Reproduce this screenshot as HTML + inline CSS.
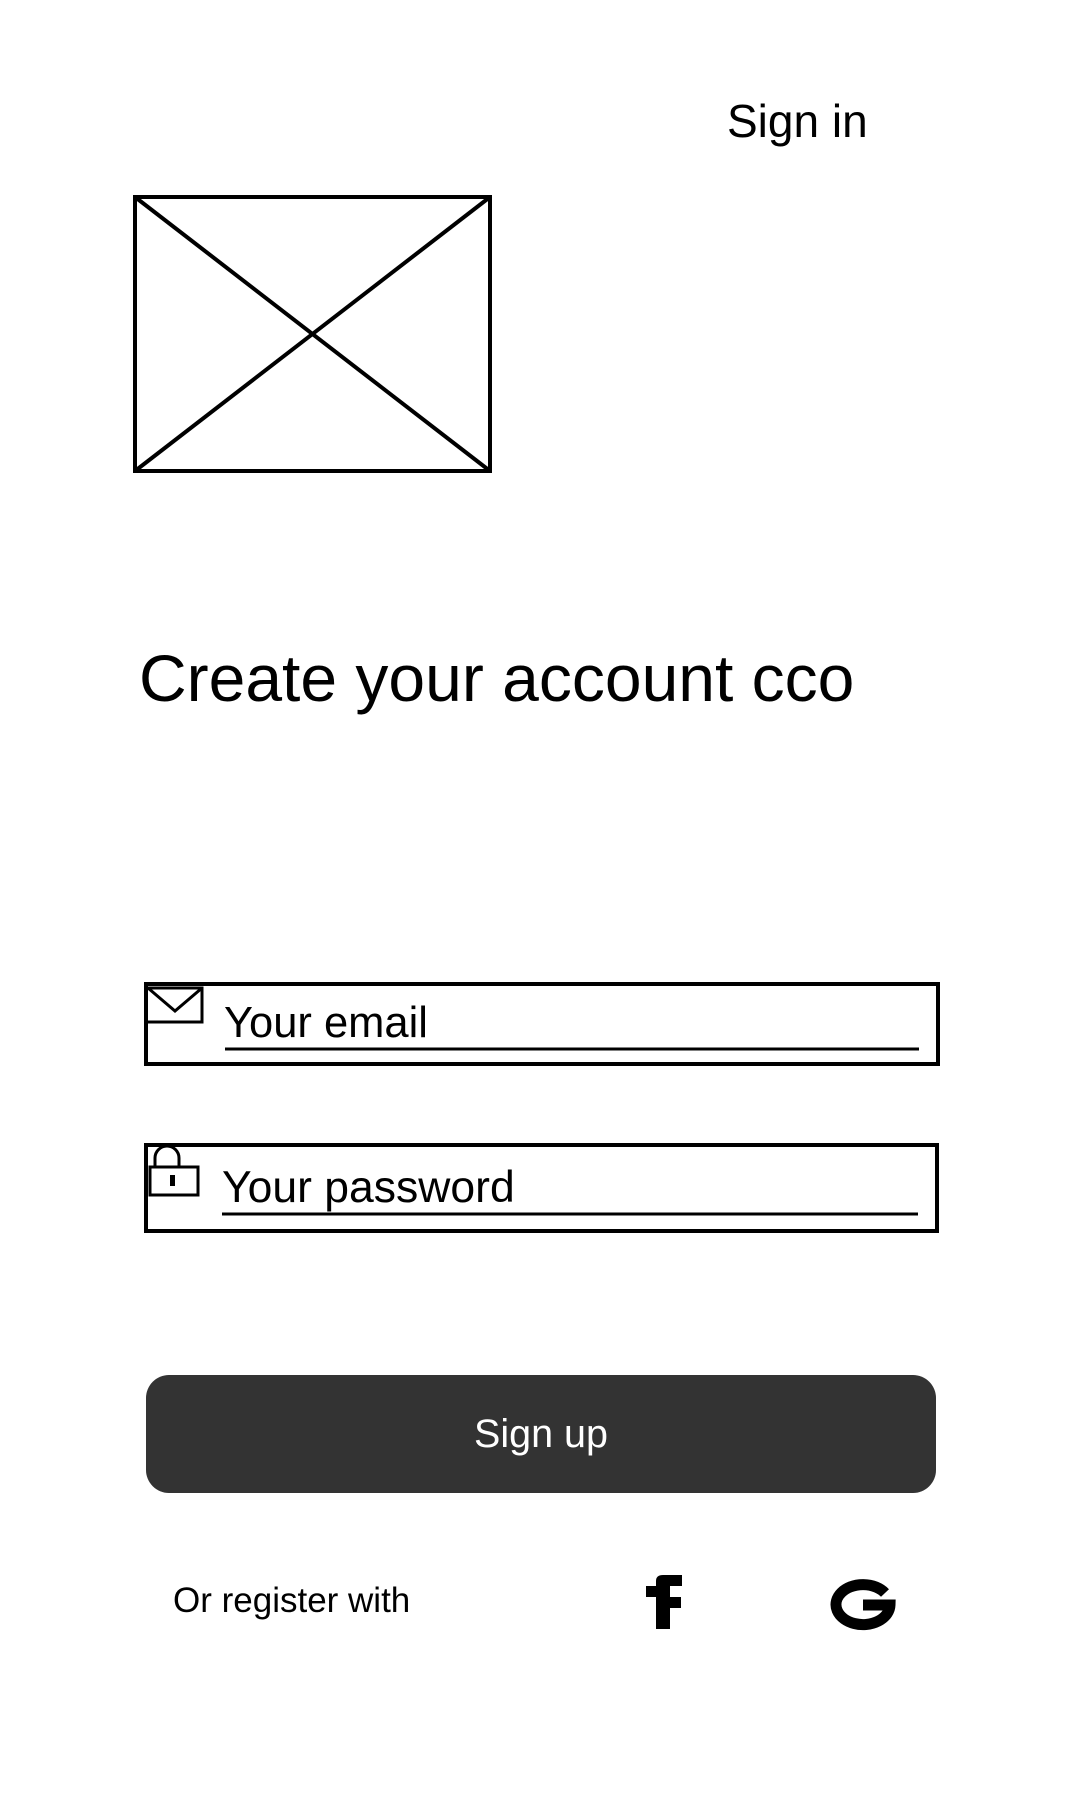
<!DOCTYPE html>
<html><head><meta charset="utf-8"><style>
html,body{margin:0;padding:0;background:#fff;}
body{width:1080px;height:1800px;position:relative;overflow:hidden;font-family:"Liberation Sans",Arial,sans-serif;color:#000;}
.t{position:absolute;white-space:nowrap;line-height:1;}
</style></head><body>
<div class="t" style="left:727px;top:98px;font-size:46px;">Sign in</div>
<svg width="1080" height="1800" style="position:absolute;left:0;top:0" xmlns="http://www.w3.org/2000/svg">
<g stroke="#000" stroke-width="4" fill="none">
<rect x="135" y="197" width="355" height="274"/>
<line x1="135" y1="197" x2="490" y2="471"/>
<line x1="490" y1="197" x2="135" y2="471"/>
<rect x="146" y="984" width="792" height="80"/>
<line x1="225" y1="1049" x2="919" y2="1049" stroke-width="3"/>
<rect x="146" y="1145" width="791" height="86"/>
<line x1="222" y1="1214" x2="918" y2="1214" stroke-width="3"/>
<path d="M148 988 H202 V1022 H148" stroke-width="3"/>
<path d="M148 988 L175 1011 L202 988" stroke-width="3"/>
<path d="M155 1168 V1158 A12 12 0 0 1 179 1158 V1168" stroke-width="3"/>
<rect x="150" y="1167" width="48" height="28" stroke-width="3"/>
</g>
<rect x="170" y="1175" width="5" height="11" fill="#000"/>
<rect x="146" y="1375" width="790" height="118" rx="23" fill="#333"/>
<path d="M656 1629 V1597 H646 V1586 H656 V1581 Q656 1575 663 1575 H682 V1586 H670 V1597 H681 V1608 H670 V1629 Z" fill="#000"/>
<path d="M885 1593 A27 20 0 1 0 890 1605 H863" stroke="#000" stroke-width="11" fill="none"/>
</svg>
<div class="t" style="left:139px;top:645px;font-size:66px;">Create your account cco</div>
<div class="t" style="left:224px;top:1002px;font-size:43.5px;">Your email</div>
<div class="t" style="left:222px;top:1166px;font-size:44.5px;">Your password</div>
<div class="t" style="left:146px;width:790px;top:1415px;font-size:39.5px;color:#fff;text-align:center;">Sign up</div>
<div class="t" style="left:173px;top:1583px;font-size:35px;">Or register with</div>
</body></html>
